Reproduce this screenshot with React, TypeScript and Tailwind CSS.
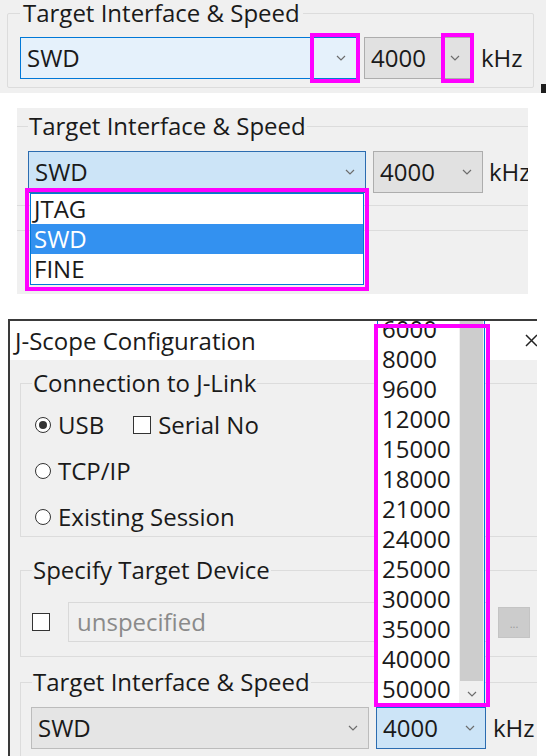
import React from "react";

type Tone = "focus" | "open" | "idle" | "idleLight";

const tones: Record<Tone, string> = {
  focus: "bg-[#e5f1fb] border-[#0078d7]",
  open: "bg-[#cce4f7] border-[#2c6cb0]",
  idle: "bg-[#e1e1e1] border-[#adadad]",
  idleLight: "bg-[#e5e5e5] border-[#bcbcbc]",
};

function Chevron() {
  return (
    <svg width="10" height="6" viewBox="0 0 10 6" fill="none">
      <polyline points="1,1 5,5 9,1" stroke="#6d6d6d" strokeWidth="1.2" />
    </svg>
  );
}

function Combo({
  value,
  tone,
  className = "",
  children,
}: {
  value: string;
  tone: Tone;
  className?: string;
  children?: React.ReactNode;
}) {
  return (
    <div className={`relative h-[42px] shrink-0 border flex items-center justify-between pl-[6px] pr-[10px] ${tones[tone]} ${className}`}>
      <span>{value}</span>
      <Chevron />
      {children}
    </div>
  );
}

function Radio({ checked }: { checked?: boolean }) {
  return (
    <span className="w-[16px] h-[16px] rounded-full border border-[#333] bg-white flex items-center justify-center shrink-0">
      {checked && <span className="w-[8px] h-[8px] rounded-full bg-[#333]" />}
    </span>
  );
}

function Check() {
  return <span className="block w-[18px] h-[18px] border border-[#333] bg-white shrink-0" />;
}

function Mark({ className }: { className: string }) {
  // magenta annotation frame
  return <div className={`absolute border-[4px] border-[#ff00ff] pointer-events-none ${className}`} />;
}

const speeds = ["6000", "8000", "9600", "12000", "15000", "18000", "21000", "24000", "25000", "30000", "35000", "40000", "50000"];

export default function App() {
  return (
    <div className="w-[546px] h-[756px] bg-white overflow-hidden flex flex-col font-['Open_Sans',sans-serif] text-[24px] leading-[30px] text-[#1a1a1a]">
      {/* shot 1 */}
      <div className="relative h-[93px] shrink-0 bg-[#f0f0f0] overflow-hidden">
        <fieldset className="ml-[7px] w-[527px] border border-[#dcdcdc] rounded-[2px] pl-[12px] pb-[8px]">
          <legend className="px-[3px] leading-[26px]">Target Interface &amp; Speed</legend>
          <div className="mt-[11px] flex items-center">
            <Combo value="SWD" tone="focus" className="w-[337px]">
              <Mark className="right-[-4px] top-[-5px] bottom-[-5px] w-[50px]" />
            </Combo>
            <Combo value="4000" tone="idle" className="ml-[7px] w-[107px]">
              <Mark className="left-[76px] top-[-5px] bottom-[-5px] w-[33px]" />
            </Combo>
            <span className="ml-[10px]">kHz</span>
          </div>
        </fieldset>
        <div className="absolute right-0 bottom-0 w-[5px] h-[9px] bg-[#1e1e1e]" />
      </div>

      {/* shot 2 */}
      <div className="mt-[15px] ml-[17px] w-[511px] h-[186px] shrink-0 bg-[#f0f0f0] overflow-hidden">
        <fieldset className="-ml-[1px] mt-[3px] w-[540px] border border-[#dcdcdc] pl-[11px] pb-[12px]">
          <legend className="px-[1px]">Target Interface &amp; Speed</legend>
          <div className="mt-[10px] flex items-center">
            <Combo value="SWD" tone="open" className="w-[338px]">
              <div className="absolute top-full left-[1px] right-[1px] mt-[1px] z-10">
                <div className="bg-white border border-[#0078d7] flex flex-col">
                  <div className="h-[30px] pl-[3px]">JTAG</div>
                  <div className="h-[30px] pl-[3px] bg-[#3391f0] text-white">SWD</div>
                  <div className="h-[30px] pl-[3px]">FINE</div>
                </div>
                <Mark className="-left-[5px] -right-[5px] -top-[5px] -bottom-[6px]" />
              </div>
            </Combo>
            <Combo value="4000" tone="idle" className="ml-[7px] w-[110px]" />
            <span className="ml-[6px]">kHz</span>
          </div>
        </fieldset>
        <div className="-ml-[1px] mt-[24px] h-[80px] border-t border-l border-[#dcdcdc]" />
      </div>

      {/* shot 3 */}
      <div className="mt-[23px] h-[439px] shrink-0 overflow-hidden">
        <div className="ml-[8px] mt-[2px] w-[529px] h-[437px] border-l-2 border-t-2 border-[#3a3a3a] bg-[#f0f0f0] overflow-hidden">
          <div className="h-[39px] bg-white flex items-center justify-between pl-[5px]">
            <span>J-Scope Configuration</span>
            <svg width="13" height="13" viewBox="0 0 13 13" className="-mr-[1px]">
              <path d="M1 1 L12 12 M12 1 L1 12" stroke="#222" strokeWidth="1.5" />
            </svg>
          </div>
          <div className="pl-[10px]">
            <fieldset className="mt-[8px] w-[525px] border border-[#dcdcdc] pl-[11px] pb-[4px]">
              <legend className="px-[1px]">Connection to J-Link</legend>
              <div className="mt-[12px] flex flex-col gap-[16px]">
                <div className="h-[30px] flex items-center">
                  <span className="ml-[3px]"><Radio checked /></span>
                  <span className="ml-[7px]">USB</span>
                  <span className="ml-[29px]"><Check /></span>
                  <span className="ml-[7px]">Serial No</span>
                </div>
                <div className="h-[30px] flex items-center">
                  <span className="ml-[3px]"><Radio /></span>
                  <span className="ml-[7px]">TCP/IP</span>
                </div>
                <div className="h-[30px] flex items-center">
                  <span className="ml-[3px]"><Radio /></span>
                  <span className="ml-[7px]">Existing Session</span>
                </div>
              </div>
            </fieldset>

            <fieldset className="mt-[18px] w-[525px] border border-[#dcdcdc] pl-[11px] pb-[14px]">
              <legend className="px-[1px]">Specify Target Device</legend>
              <div className="mt-[17px] flex items-center">
                <Check />
                <div className="ml-[18px] w-[422px] h-[40px] border border-[#d9d9d9] bg-[#f0f0f0] text-[#8a8a8a] pl-[8px] flex items-center">
                  unspecified
                </div>
                <div className="ml-[8px] w-[32px] h-[31px] bg-[#cccccc] border border-[#c4c4c4] text-[11px] leading-[14px] text-[#9a9a9a] flex items-end justify-center pb-[6px]">
                  ...
                </div>
              </div>
            </fieldset>

            <fieldset className="mt-[10px] w-[525px] border border-[#dcdcdc] pl-[11px] pb-[14px]">
              <legend className="px-[1px]">Target Interface &amp; Speed</legend>
              <div className="mt-[10px] flex items-center">
                <Combo value="SWD" tone="idleLight" className="-ml-[1px] w-[338px]" />
                <Combo value="4000" tone="open" className="ml-[7px] w-[110px]">
                  <div className="absolute bottom-full left-0 right-0 h-[400px] z-10">
                    <div className="absolute inset-0 bg-white border border-[#0078d7] overflow-hidden flex flex-col justify-end pb-[3px]">
                      {speeds.map((s) => (
                        <div key={s} className="h-[30px] shrink-0 pl-[4px] pr-[26px]">{s}</div>
                      ))}
                      <div className="absolute top-0 bottom-0 right-0 w-[25px] bg-[#f0f0f0] flex flex-col">
                        <div className="flex-1 mx-[1px] bg-[#cdcdcd]" />
                        <div className="h-[26px] flex items-center justify-center">
                          <Chevron />
                        </div>
                      </div>
                    </div>
                    <Mark className="left-[-3px] right-[-5px] top-[16px] bottom-[1px]" />
                  </div>
                </Combo>
                <span className="ml-[7px]">kHz</span>
              </div>
            </fieldset>
          </div>
        </div>
      </div>
    </div>
  );
}
